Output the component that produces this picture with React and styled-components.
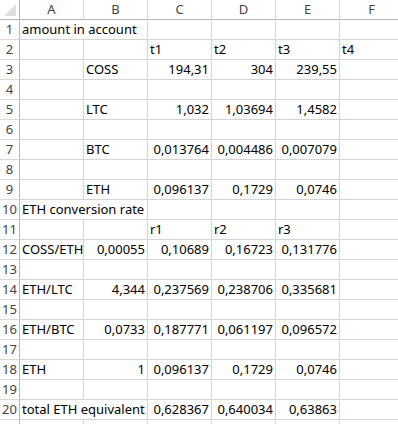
import React from 'react';
import styled, { createGlobalStyle } from 'styled-components';

const GlobalStyle = createGlobalStyle`
    html, body {
        margin: 0;
        height: 100%;
        overflow: hidden;
        background: #fff;
    }
`;

const columns = ['A', 'B', 'C', 'D', 'E', 'F'];

// one array per row, columns A..F; '' = empty cell
const rows = [
    ['amount in account', '', '', '', '', ''],
    ['', '', 't1', 't2', 't3', 't4'],
    ['', 'COSS', '194,31', '304', '239,55', ''],
    ['', '', '', '', '', ''],
    ['', 'LTC', '1,032', '1,03694', '1,4582', ''],
    ['', '', '', '', '', ''],
    ['', 'BTC', '0,013764', '0,004486', '0,007079', ''],
    ['', '', '', '', '', ''],
    ['', 'ETH', '0,096137', '0,1729', '0,0746', ''],
    ['ETH conversion rate', '', '', '', '', ''],
    ['', '', 'r1', 'r2', 'r3', ''],
    ['COSS/ETH', '0,00055', '0,10689', '0,16723', '0,131776', ''],
    ['', '', '', '', '', ''],
    ['ETH/LTC', '4,344', '0,237569', '0,238706', '0,335681', ''],
    ['', '', '', '', '', ''],
    ['ETH/BTC', '0,0733', '0,187771', '0,061197', '0,096572', ''],
    ['', '', '', '', '', ''],
    ['ETH', '1', '0,096137', '0,1729', '0,0746', ''],
    ['', '', '', '', '', ''],
    ['total ETH equivalent', '', '0,628367', '0,640034', '0,63863', ''],
];

const isNumber = (v) => /^[\d,]+$/.test(v);

// long labels in column A spill over the empty B cell
const spillsOver = (row) => row[0].length > 10 && row[1] === '';

const App = () => {
    return (
        <>
            <GlobalStyle />
            <Sheet>
                <Corner><Triangle /></Corner>
                {columns.map((c) => <ColHeader key={c}>{c}</ColHeader>)}
                {rows.map((row, r) => {
                    const wide = spillsOver(row);
                    return (
                        <React.Fragment key={r}>
                            <RowHeader>{r + 1}</RowHeader>
                            {row.map((value, c) => {
                                if (wide && c === 1) return null;
                                return (
                                    <Cell key={c} $right={isNumber(value)} $span={wide && c === 0 ? 2 : 1}>
                                        {value}
                                    </Cell>
                                );
                            })}
                        </React.Fragment>
                    );
                })}
                {/* next row, only its top edge shows in the window */}
                <RowHeader />
                {columns.map((c) => <Cell key={c} $span={1} />)}
            </Sheet>
        </>
    );
};

export default App;


const Sheet = styled.div`
    display: grid;
    grid-template-columns: 20px repeat(6, 64px);
    grid-auto-rows: 20px;
    font-family: 'Noto Sans', 'Liberation Sans', sans-serif;
    font-size: 13px;
    color: #000;
`

const Corner = styled.div`
    display: flex;
    justify-content: flex-end;
    align-items: flex-end;
    padding: 0 3px 3px 0;
    box-sizing: border-box;
    border-right: 1px solid #b8b8b8;
    border-bottom: 1px solid #b8b8b8;
`

const Triangle = styled.div`
    width: 0;
    height: 0;
    border-left: 12px solid transparent;
    border-bottom: 12px solid #dfdfdf;
`

const ColHeader = styled.div`
    display: flex;
    justify-content: center;
    align-items: center;
    box-sizing: border-box;
    border-right: 1px solid #dadada;
    border-bottom: 1px solid #b8b8b8;
    color: #444;
    line-height: 19px;
`

const RowHeader = styled.div`
    display: flex;
    justify-content: center;
    box-sizing: border-box;
    border-right: 1px solid #b8b8b8;
    border-bottom: 1px solid #dadada;
    color: #444;
    line-height: 19px;
`

const Cell = styled.div`
    grid-column: span ${(p) => p.$span};
    box-sizing: border-box;
    padding: 0 2px 0 2px;
    border-right: 1px solid #d4d4d4;
    border-bottom: 1px solid #d4d4d4;
    line-height: 19px;
    text-align: ${(p) => (p.$right ? 'right' : 'left')};
    white-space: nowrap;
    overflow: hidden;
`
